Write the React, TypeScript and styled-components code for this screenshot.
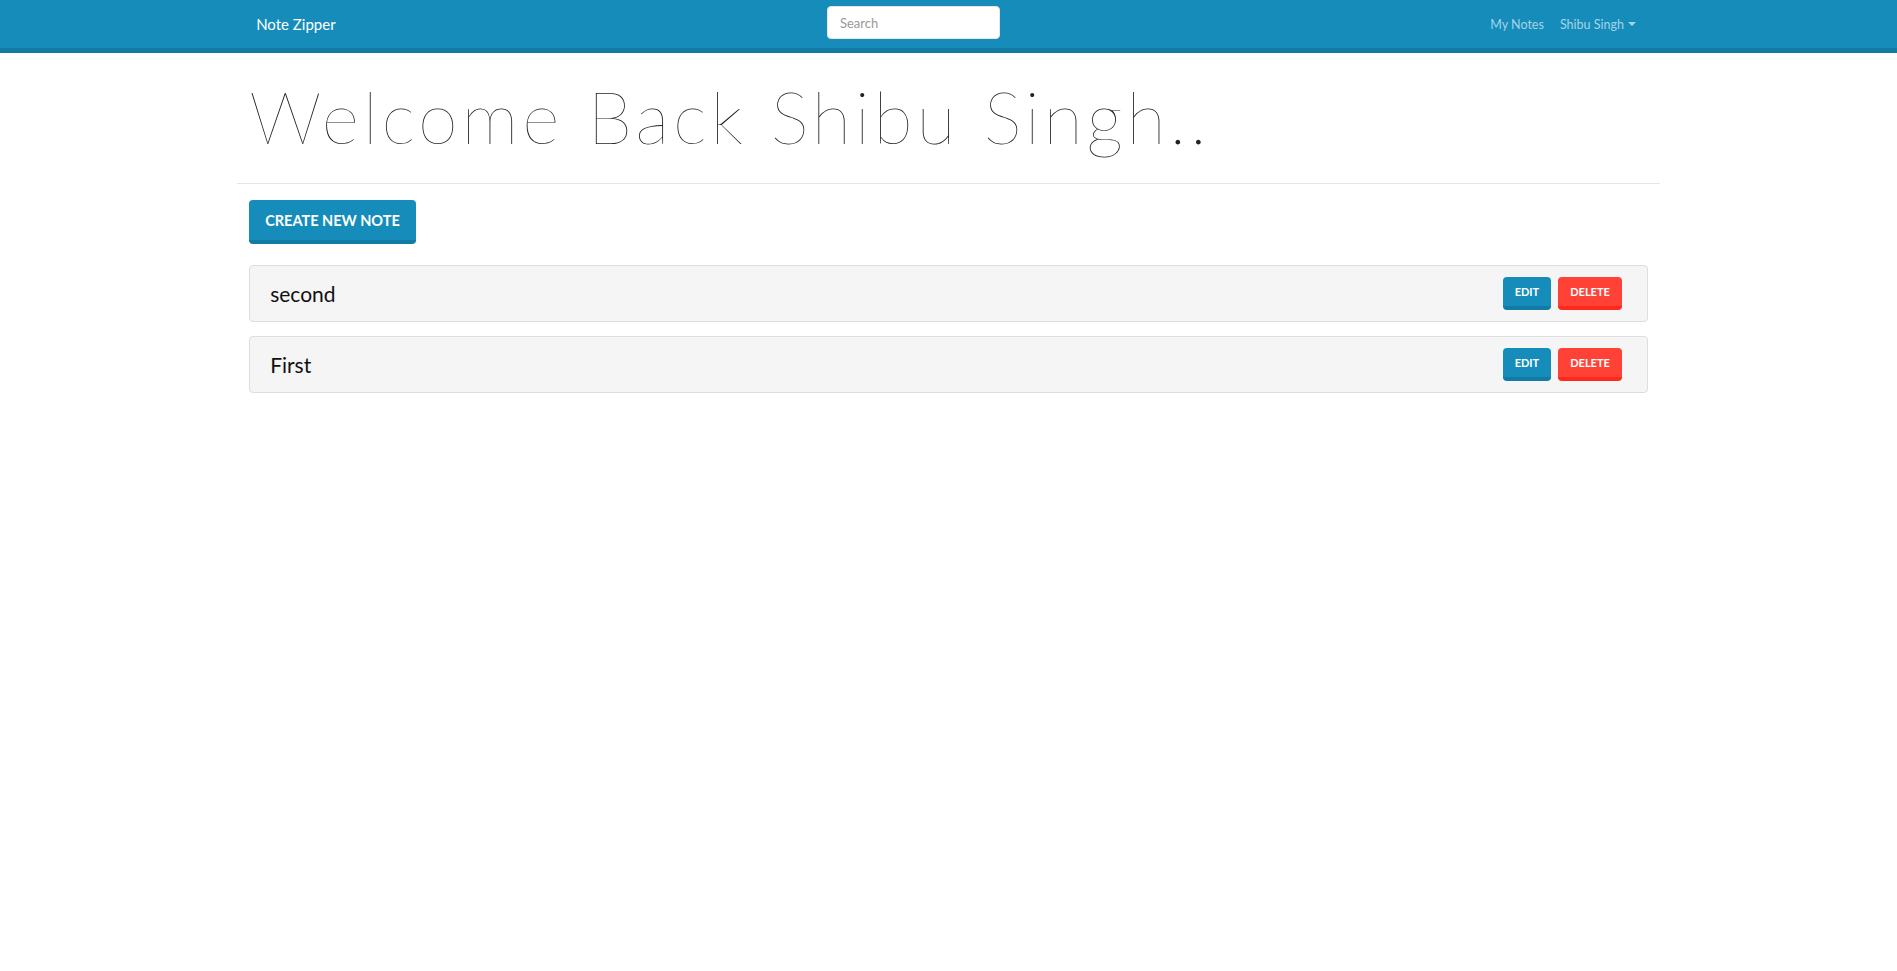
import React from 'react';
import styled, { createGlobalStyle } from 'styled-components';

const notes = [
  { id: 1, title: 'second' },
  { id: 2, title: 'First' },
];

export default function App() {
  return (
    <>
      <GlobalStyle />
      <Navbar>
        <NavInner>
          <Brand href="#">Note Zipper</Brand>
          <SearchSlot>
            <SearchInput type="text" placeholder="Search" />
          </SearchSlot>
          <NavLinks>
            <NavLink href="#">My Notes</NavLink>
            <NavLink href="#">
              Shibu Singh
              <Caret />
            </NavLink>
          </NavLinks>
        </NavInner>
      </Navbar>
      <Main>
        <Title>Welcome Back Shibu Singh..</Title>
        <Divider />
        <Content>
          <PrimaryButton>Create New Note</PrimaryButton>
          <NoteList>
            {notes.map((note) => (
              <NoteCard key={note.id}>
                <NoteTitle>{note.title}</NoteTitle>
                <Actions>
                  <SmallButton $variant="primary">Edit</SmallButton>
                  <SmallButton $variant="danger">Delete</SmallButton>
                </Actions>
              </NoteCard>
            ))}
          </NoteList>
        </Content>
      </Main>
    </>
  );
}

const GlobalStyle = createGlobalStyle`
  * {
    box-sizing: border-box;
  }
  body {
    margin: 0;
    background: #fff;
    color: #222;
    font-family: Lato, "Open Sans", Arial, sans-serif;
  }
`;

const Navbar = styled.nav`
  background: #158cba;
  border-bottom: 5px solid #127ba3;
  height: 53px;
`;

const NavInner = styled.div`
  width: 75%;
  margin: 0 auto;
  height: 48px;
  display: flex;
  align-items: center;
  padding: 0 17px 0 19px;
`;

const Brand = styled.a`
  color: #fff;
  text-decoration: none;
  font-size: 15px;
  margin-right: 8px;
`;

const SearchSlot = styled.div`
  flex: 1;
  display: flex;
  justify-content: center;
`;

const SearchInput = styled.input`
  width: 173px;
  height: 33px;
  margin-bottom: 3px;
  border: 1px solid #e7e7e7;
  border-radius: 4px;
  padding: 0 12px;
  font-family: Lato, "Open Sans", Arial, sans-serif;
  font-size: 13px;
  color: #222;
  outline: none;
  &::placeholder {
    color: #999;
  }
`;

const NavLinks = styled.div`
  display: flex;
  align-items: center;
  gap: 2px;
`;

const NavLink = styled.a`
  display: flex;
  align-items: center;
  padding: 0 7px;
  color: #a6d4e6;
  font-size: 12.5px;
  text-decoration: none;
`;

const Caret = styled.span`
  display: inline-block;
  margin-left: 4px;
  width: 0;
  height: 0;
  border-left: 4px solid transparent;
  border-right: 4px solid transparent;
  border-top: 4px solid #a6d4e6;
`;

const Main = styled.main`
  width: 75%;
  margin: 0 auto;
`;

const Title = styled.h1`
  margin: 0;
  padding: 20px 12px 24px;
  font-family: Lato, "Open Sans", sans-serif;
  font-weight: 200;
  font-size: 72px;
  line-height: 1.2;
  letter-spacing: 3.8px;
  color: #222;
`;

const Divider = styled.hr`
  margin: 0;
  border: 0;
  border-top: 1px solid #e5e5e5;
`;

const Content = styled.div`
  padding: 16px 12px;
`;

const PrimaryButton = styled.button`
  height: 44px;
  padding: 0 16px;
  background: #158cba;
  border: 0;
  border-bottom: 4px solid #127ba3;
  border-radius: 4px;
  color: #fff;
  font-family: Lato, "Open Sans", sans-serif;
  font-weight: 700;
  font-size: 14.5px;
  text-transform: uppercase;
  cursor: pointer;
`;

const NoteList = styled.div`
  display: flex;
  flex-direction: column;
  gap: 14px;
  margin-top: 21px;
`;

const NoteCard = styled.div`
  display: flex;
  align-items: center;
  justify-content: space-between;
  height: 57px;
  padding: 0 25px 0 20px;
  background: #f5f5f5;
  border: 1px solid #dedede;
  border-radius: 4px;
`;

const NoteTitle = styled.span`
  font-size: 21px;
  color: #111;
`;

const Actions = styled.div`
  display: flex;
  gap: 7px;
`;

const SmallButton = styled.button<{ $variant: 'primary' | 'danger' }>`
  height: 33px;
  padding: 0 12px;
  border: 0;
  border-bottom: 4px solid ${(p) => (p.$variant === 'danger' ? '#ff291b' : '#127ba3')};
  background: ${(p) => (p.$variant === 'danger' ? '#ff4136' : '#158cba')};
  border-radius: 4px;
  color: #fff;
  font-family: Lato, "Open Sans", sans-serif;
  font-weight: 700;
  font-size: 11px;
  text-transform: uppercase;
  cursor: pointer;
`;
